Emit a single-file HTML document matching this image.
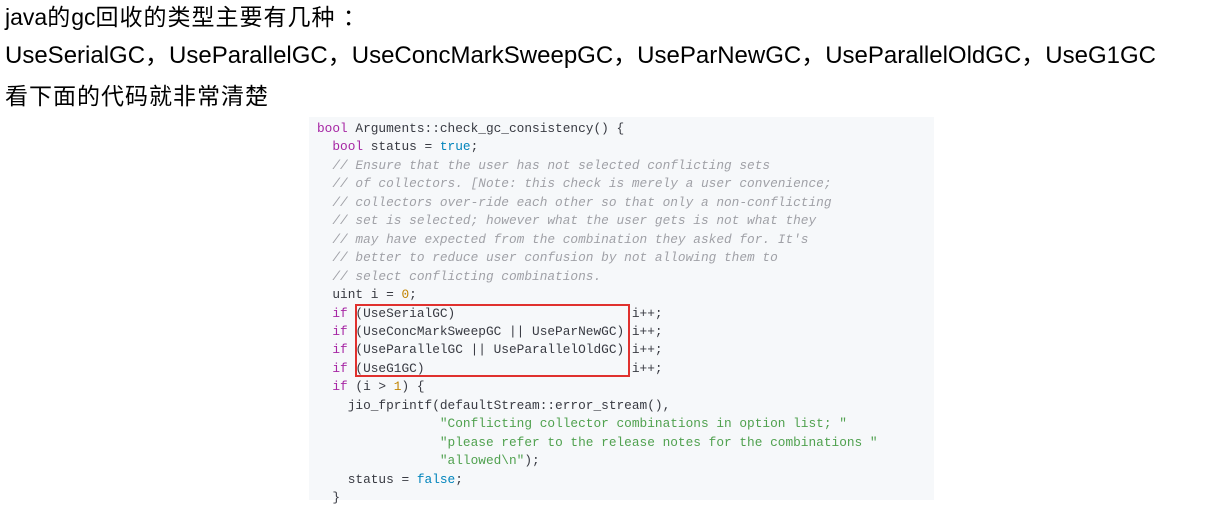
<!DOCTYPE html>
<html><head><meta charset="utf-8"><style>
body{margin:0;width:1219px;height:500px;overflow:hidden;background:#fff;font-family:"Liberation Sans","Noto Sans CJK SC",sans-serif;color:#000}
.t{position:absolute;left:5px;font-size:23px;white-space:nowrap;line-height:1}
.cj{letter-spacing:1px}
.code{position:absolute;left:309px;top:117px;width:625px;height:383px;background:#f6f8fa}
pre{margin:0;position:absolute;left:317px;top:120px;font-family:"Liberation Mono",monospace;font-size:12.8px;line-height:18.45px;color:#383a42}
.k{color:#a626a4}.b{color:#0184bc}.c{color:#a0a1a7;font-style:italic}.n{color:#c18401}.s{color:#50a14f}
.box{position:absolute;left:355px;top:304px;width:271px;height:69px;border:2px solid #e0312e}
</style></head><body>
<div class="t" style="top:6px">java<span class="cj">的</span>gc<span class="cj">回收的类型主要有几种 ：</span></div>
<div class="t" style="top:44px;font-size:24px">UseSerialGC，UseParallelGC，UseConcMarkSweepGC，UseParNewGC，UseParallelOldGC，UseG1GC</div>
<div class="t cj" style="top:85px">看下面的代码就非常清楚</div>
<div class="code"></div>
<pre><span class="k">bool</span> Arguments::check_gc_consistency() {
  <span class="k">bool</span> status = <span class="b">true</span>;
  <span class="c">// Ensure that the user has not selected conflicting sets</span>
  <span class="c">// of collectors. [Note: this check is merely a user convenience;</span>
  <span class="c">// collectors over-ride each other so that only a non-conflicting</span>
  <span class="c">// set is selected; however what the user gets is not what they</span>
  <span class="c">// may have expected from the combination they asked for. It's</span>
  <span class="c">// better to reduce user confusion by not allowing them to</span>
  <span class="c">// select conflicting combinations.</span>
  uint i = <span class="n">0</span>;
  <span class="k">if</span> (UseSerialGC)                       i++;
  <span class="k">if</span> (UseConcMarkSweepGC || UseParNewGC) i++;
  <span class="k">if</span> (UseParallelGC || UseParallelOldGC) i++;
  <span class="k">if</span> (UseG1GC)                           i++;
  <span class="k">if</span> (i &gt; <span class="n">1</span>) {
    jio_fprintf(defaultStream::error_stream(),
                <span class="s">"Conflicting collector combinations in option list; "</span>
                <span class="s">"please refer to the release notes for the combinations "</span>
                <span class="s">"allowed\n"</span>);
    status = <span class="b">false</span>;
  }
</pre>
<div class="box"></div>
</body></html>
